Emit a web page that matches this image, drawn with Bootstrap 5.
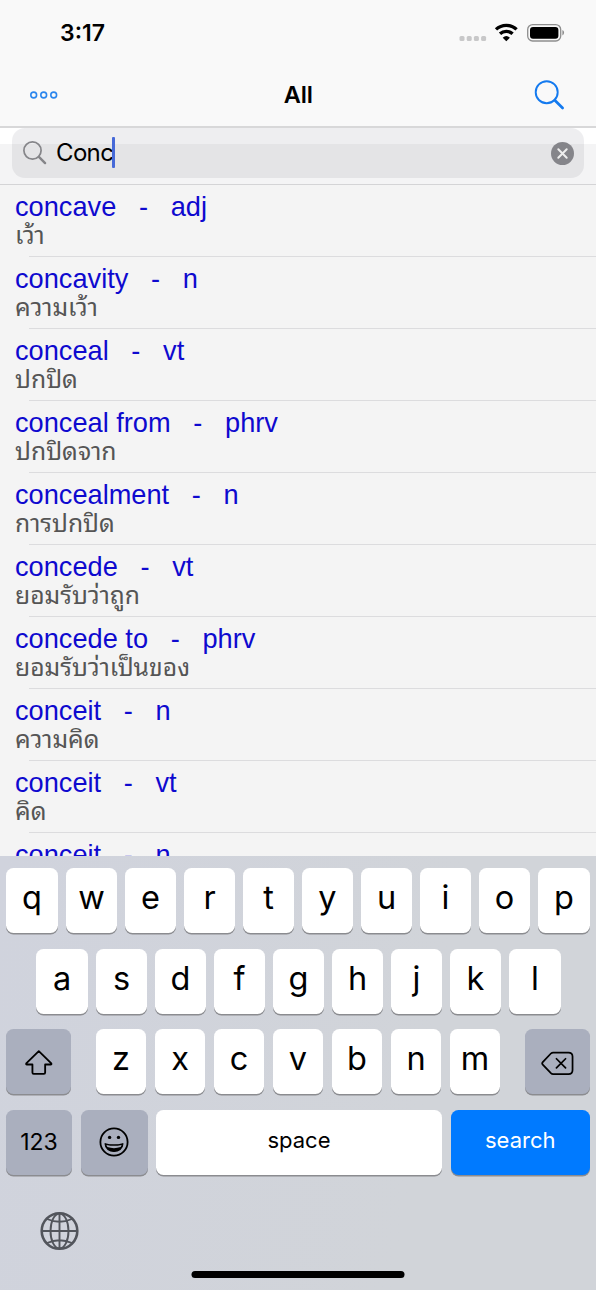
<!DOCTYPE html>
<html lang="en">
<head>
<meta charset="utf-8">
<meta name="viewport" content="width=device-width, initial-scale=1">
<title>All</title>
<link href="https://cdn.jsdelivr.net/npm/bootstrap@5.3.0/dist/css/bootstrap.min.css" rel="stylesheet">
<style>
body{font-family:Inter,"Liberation Sans",sans-serif;background:#f4f4f4;color:#000}
svg{display:block;flex:none}
.phone{width:596px;height:1290px}
.topbar{height:128px;background:#f9f9f9;border-bottom:2px solid #d8d8d9}
.statusbar{height:64px;padding:2px 31px 0 60px}
.clock{font-size:23px;font-weight:600;line-height:1}
.titlebar{display:grid;grid-template-columns:1fr auto 1fr;height:62px;padding:0 31px 0 30px}
.screen-title{font-size:23.5px;font-weight:600;line-height:1;letter-spacing:-.2px;padding-left:1.5px}
.searchwrap{height:57px;padding:0 12px 6px;background:linear-gradient(#fff 16px,#f4f4f5 16px);border-bottom:1px solid #d4d4d6}
.searchfield{height:50px;border-radius:13px;background:linear-gradient(#eeeef0 16px,#e4e4e6 16px);padding:0 10px 0 11px}
.query{font-size:24px;letter-spacing:-.65px;line-height:1;margin-left:9px}
.caret{width:3px;height:31px;background:#4669d8;border-radius:1px;margin-top:-1px;margin-left:-1px}
.words{background:#f4f4f4;height:671px}
.word{height:72px;padding:7px 0 0 15px;border:0;background:linear-gradient(#dcdcde,#dcdcde) no-repeat 29px 100%/100% 1.5px}
.term{font:27.2px/30px "Liberation Sans",sans-serif;color:#0e09cf;white-space:pre;height:30px}
.meaning{font:24.7px/22px "Noto Sans Thai Looped","Noto Looped Thai","Loma","Garuda","Liberation Sans","Noto Sans Thai",sans-serif;color:#555;height:30px;white-space:nowrap}
.keyboard{background:linear-gradient(100deg,#d0d3dd,#d1d4d9 70%);height:434px;padding:12px 6px 0;position:relative}
.keyrow{gap:8.5px;height:65px;margin-bottom:15.6px}
.keycap{width:50.5px;height:65px;border-radius:7.5px;background:#fff;box-shadow:0 1.5px 0 #8b8c90;font-size:32.5px;font-weight:400;line-height:1;padding-bottom:4px;flex:none}
.keycap.endcap{width:51.5px}
.keycap.dim{background:#aaafbe}
.keycap.side{width:65px;padding:0}
.keycap.legend{font-size:22px;font-weight:400;padding-bottom:4px}
.keycap.go{background:#007aff;color:#fff}
.globe-area{padding:21px 0 0 34px}
.homebar{width:213px;height:7px;border-radius:4px;background:#000;margin-bottom:12px}
</style>
<script src="https://cdn.jsdelivr.net/npm/bootstrap@5.3.0/dist/js/bootstrap.bundle.min.js"></script>
</head>
<body>
<main class="phone overflow-hidden d-flex flex-column">
<header class="topbar flex-shrink-0">
  <div class="statusbar d-flex align-items-center justify-content-between">
    <div class="clock">3:17</div>
    <svg width="107" height="24" viewBox="0 0 107 24">
      <g fill="#c8c8c9"><rect x="1.5" y="15" width="5" height="5" rx="1.5"/><rect x="8.7" y="15" width="5" height="5" rx="1.5"/><rect x="15.9" y="15" width="5" height="5" rx="1.5"/><rect x="23.1" y="15" width="5" height="5" rx="1.5"/></g>
      <g fill="none" stroke="#000" stroke-width="3.3"><path d="M38 8.4a15 15 0 0 1 20.6 0"/><path d="M42 12.800a9.2 9.2 0 0 1 12.600 0"/></g>
      <path d="M44.700 16.700a5.400 5.400 0 0 1 7.200 0L48.300 20.300z"/>
      <rect x="69.700" y="3.600" width="33" height="16.400" rx="5" fill="none" stroke="#8e8e8e" stroke-width="1.300"/><rect x="72" y="5.900" width="28.400" height="11.800" rx="3"/><path d="M104.400 9a3 3 0 0 1 0 5.400z" fill="#8e8e8e"/>
    </svg>
  </div>
  <nav class="titlebar align-items-center">
    <svg width="28" height="10" viewBox="0 0 28 10" fill="none" stroke="#2b86ed" stroke-width="1.600"><circle cx="3.700" cy="5" r="2.900"/><circle cx="13.700" cy="5" r="2.900"/><circle cx="23.700" cy="5" r="2.900"/></svg>
    <div class="screen-title">All</div>
    <svg class="ms-auto" width="31" height="31" viewBox="0 0 31 31" fill="none" stroke="#147aef" stroke-linecap="round"><circle cx="12.700" cy="12.200" r="11" stroke-width="1.900"/><path d="M20.800 20.300 28.600 28" stroke-width="2.700"/></svg>
  </nav>
</header>
<div class="searchwrap flex-shrink-0">
  <div class="searchfield d-flex align-items-center">
    <svg width="24" height="24" viewBox="0 0 24 24" fill="none" stroke="#858589" stroke-linecap="round"><circle cx="9.500" cy="9.500" r="8.600" stroke-width="1.700"/><path d="m15.900 15.900 6.200 6.200" stroke-width="2.400"/></svg>
    <div class="query">Conc</div><div class="caret"></div>
    <svg class="ms-auto" width="23" height="23" viewBox="0 0 23 23"><circle cx="11.500" cy="11.500" r="11.500" fill="#85858a"/><path d="m7.300 7.300 8.400 8.400m0-8.400-8.400 8.400" stroke="#eee" stroke-width="2" stroke-linecap="round"/></svg>
  </div>
</div>
<section class="words list-group list-group-flush rounded-0 overflow-hidden flex-shrink-0">
  <div class="word flex-shrink-0"><div class="term">concave   -   adj</div><div class="meaning" lang="th">เว้า</div></div>
  <div class="word flex-shrink-0"><div class="term">concavity   -   n</div><div class="meaning" lang="th">ความเว้า</div></div>
  <div class="word flex-shrink-0"><div class="term">conceal   -   vt</div><div class="meaning" lang="th">ปกปิด</div></div>
  <div class="word flex-shrink-0"><div class="term">conceal from   -   phrv</div><div class="meaning" lang="th">ปกปิดจาก</div></div>
  <div class="word flex-shrink-0"><div class="term">concealment   -   n</div><div class="meaning" lang="th">การปกปิด</div></div>
  <div class="word flex-shrink-0"><div class="term">concede   -   vt</div><div class="meaning" lang="th">ยอมรับว่าถูก</div></div>
  <div class="word flex-shrink-0"><div class="term">concede to   -   phrv</div><div class="meaning" lang="th">ยอมรับว่าเป็นของ</div></div>
  <div class="word flex-shrink-0"><div class="term">conceit   -   n</div><div class="meaning" lang="th">ความคิด</div></div>
  <div class="word flex-shrink-0"><div class="term">conceit   -   vt</div><div class="meaning" lang="th">คิด</div></div>
  <div class="word flex-shrink-0"><div class="term">conceit   -   n</div></div>
</section>
<section class="keyboard flex-shrink-0">
  <div class="keyrow d-flex justify-content-center">
    <div class="keycap endcap d-flex align-items-center justify-content-center">q</div>
    <div class="keycap d-flex align-items-center justify-content-center">w</div>
    <div class="keycap d-flex align-items-center justify-content-center">e</div>
    <div class="keycap d-flex align-items-center justify-content-center">r</div>
    <div class="keycap d-flex align-items-center justify-content-center">t</div>
    <div class="keycap d-flex align-items-center justify-content-center">y</div>
    <div class="keycap d-flex align-items-center justify-content-center">u</div>
    <div class="keycap d-flex align-items-center justify-content-center">i</div>
    <div class="keycap d-flex align-items-center justify-content-center">o</div>
    <div class="keycap endcap d-flex align-items-center justify-content-center">p</div>
  </div>
  <div class="keyrow d-flex justify-content-center ps-1 pe-0" style="margin-right:3px">
    <div class="keycap endcap d-flex align-items-center justify-content-center">a</div>
    <div class="keycap d-flex align-items-center justify-content-center">s</div>
    <div class="keycap d-flex align-items-center justify-content-center">d</div>
    <div class="keycap d-flex align-items-center justify-content-center">f</div>
    <div class="keycap d-flex align-items-center justify-content-center">g</div>
    <div class="keycap d-flex align-items-center justify-content-center">h</div>
    <div class="keycap d-flex align-items-center justify-content-center">j</div>
    <div class="keycap d-flex align-items-center justify-content-center">k</div>
    <div class="keycap endcap d-flex align-items-center justify-content-center">l</div>
  </div>
  <div class="keyrow d-flex justify-content-between">
    <div class="keycap dim side d-flex align-items-center justify-content-center"><svg width="29" height="26" viewBox="0 0 30 27" fill="none" stroke="#000" stroke-width="1.900" stroke-linejoin="round"><path d="M15.300 2.200 28.300 15q.5 1-.7 1.100h-5.700v8.400q0 1.300-1.300 1.300H10q-1.300 0-1.300-1.300v-8.400H3q-1.200-.1-.7-1.100z"/></svg></div>
    <div class="keyrow d-flex m-0">
      <div class="keycap d-flex align-items-center justify-content-center">z</div>
      <div class="keycap d-flex align-items-center justify-content-center">x</div>
      <div class="keycap d-flex align-items-center justify-content-center">c</div>
      <div class="keycap d-flex align-items-center justify-content-center">v</div>
      <div class="keycap d-flex align-items-center justify-content-center">b</div>
      <div class="keycap d-flex align-items-center justify-content-center">n</div>
      <div class="keycap d-flex align-items-center justify-content-center">m</div>
    </div>
    <div class="keycap dim side d-flex align-items-center justify-content-center pt-1"><svg width="33" height="25" viewBox="0 0 34 25" fill="none" stroke="#000" stroke-width="1.800" stroke-linejoin="round" stroke-linecap="round"><path d="M12.500 1.200h15.800q4.200 0 4.200 4.200v13.800q0 4.200-4.200 4.200H12.500q-1.300 0-2.300-1L1.800 13.600q-1.200-1.300 0-2.600l8.400-8.800q1-1 2.300-1z"/><path d="m15.900 7.600 9.400 9.400m0-9.400-9.400 9.400"/></svg></div>
  </div>
  <div class="keyrow d-flex">
    <div class="keycap dim legend d-flex align-items-center justify-content-center" style="width:66px;font-size:23px;padding-bottom:0">123</div>
    <div class="keycap dim legend d-flex align-items-center justify-content-center" style="width:66.500px;margin-left:.5px;padding:0"><svg width="30" height="30" viewBox="0 0 30 30"><circle cx="15" cy="15" r="13.600" fill="none" stroke="#000" stroke-width="1.800"/><circle cx="10.600" cy="10.400" r="1.700"/><circle cx="19.500" cy="10.400" r="1.700"/><path d="M6.200 16.800q8.800 2.500 17.600 0c-.2 10-17.400 10-17.600 0z" fill="#000" stroke="#000" stroke-width="1.400" stroke-linejoin="round"/><path d="M7.400 17.900q7.600 1.900 15.200 0l-1 2.200q-6.600 2.300-13.200 0z" fill="#aaafbe"/></svg></div>
    <div class="keycap legend flex-fill d-flex align-items-center justify-content-center">space</div>
    <div class="keycap go legend d-flex align-items-center justify-content-center" style="width:139.500px">search</div>
  </div>
  <div class="globe-area d-flex">
    <svg width="40" height="40" viewBox="0 0 40 40" fill="none" stroke="#52555c" stroke-width="1.900"><circle cx="19.500" cy="20" r="17.800" stroke-width="2.600"/><ellipse cx="19.500" cy="20" rx="9" ry="17.500"/><path d="M19.500 2v36M1.500 20h36M7 8q12.500 5.500 25 0M7 32q12.500-5.500 25 0"/></svg>
  </div>
  <div class="homebar position-absolute bottom-0 start-50 translate-middle-x"></div>
</section>
</main>
</body>
</html>
